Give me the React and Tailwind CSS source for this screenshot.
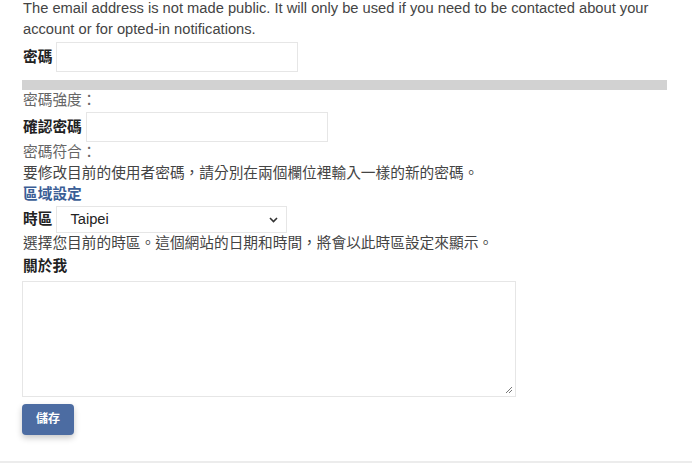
import React from 'react';

const font = { fontFamily: '"Liberation Sans", "Noto Sans CJK TC", sans-serif' };

const App = () => {
  return (
    <div
      className="w-[692px] h-[463px] overflow-hidden bg-white text-[14.7px] leading-[21px] text-[#444] flex flex-col"
      style={font}
    >
      <div className="flex-1 pl-[23px] pr-[22px] -mt-[2px]">
        <p>
          The email address is not made public. It will only be used if you need to be contacted about your
          account or for opted-in notifications.
        </p>

        {/* password */}
        <div className="flex items-center mt-[2px]">
          <label className="font-bold text-[#222] mr-[4px]">密碼</label>
          <input type="password" className="w-[242px] h-[30px] border border-[#e6e6e6] bg-white" />
        </div>
        <div className="mt-[8px] -ml-[1px] w-[645px] h-[10px] bg-[#d2d2d2]" />
        <p className="text-[#666]">密碼強度：</p>

        <div className="flex items-center mt-[1px]">
          <label className="font-bold text-[#222] mr-[4px]">確認密碼</label>
          <input type="password" className="w-[242px] h-[30px] border border-[#e6e6e6] bg-white" />
        </div>
        <p className="text-[#666]">密碼符合：</p>
        <p>要修改目前的使用者密碼，請分別在兩個欄位裡輸入一樣的新的密碼。</p>

        <h3 className="font-bold text-[#3b5e96]">區域設定</h3>
        <div className="flex items-center mt-[1px]">
          <label className="font-bold text-[#222] mr-[4px]">時區</label>
          <div className="relative w-[231px] h-[27px] border border-[#e6e6e6] bg-white flex items-center pl-[13px] text-[#222]">
            Taipei
            <svg
              className="absolute right-[8px] top-[10px]"
              width="9"
              height="6"
              viewBox="0 0 9 6"
              fill="none"
              stroke="#333"
              strokeWidth="1.6"
            >
              <path d="M1 1l3.5 3.5L8 1" />
            </svg>
          </div>
        </div>
        <p>選擇您目前的時區。這個網站的日期和時間，將會以此時區設定來顯示。</p>

        <label className="block mt-[2px] font-bold text-[#222]">關於我</label>
        <div className="relative mt-[4px] -ml-[1px] w-[494px] h-[116px] border border-[#e6e6e6] bg-white">
          <svg className="absolute right-[2px] bottom-[2px]" width="8" height="8" viewBox="0 0 8 8" stroke="#777" strokeWidth="1">
            <path d="M7 1L1 7M7 4L4 7" />
          </svg>
        </div>

        <button className="mt-[7px] -ml-[1px] w-[52px] h-[31px] rounded-[4px] bg-[#4c6ca2] text-white text-[12px] font-bold shadow-[0_3px_6px_rgba(0,0,0,0.22)]">
          儲存
        </button>
      </div>
      <div className="h-[2px] bg-[#ececec]" />
    </div>
  );
};

export default App;
